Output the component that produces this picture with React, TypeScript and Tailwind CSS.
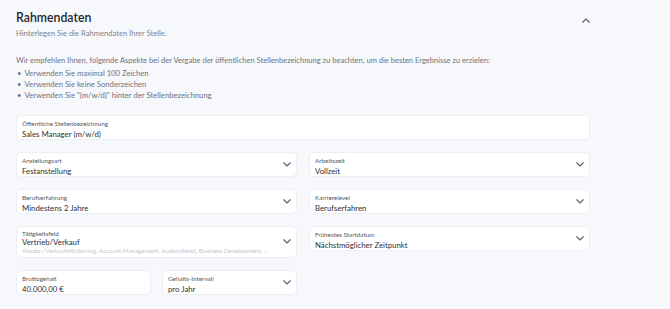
interface FieldProps {
  label: string
  value: string
  hint?: string
  select?: boolean
  className?: string
}

function Chevron({ up }: { up?: boolean }) {
  return (
    <svg width="8" height="5" viewBox="0 0 8 5" fill="none" className="shrink-0">
      <path
        d={up ? 'M0.75 4.25 L4 1 L7.25 4.25' : 'M0.75 0.75 L4 4 L7.25 0.75'}
        stroke="#5b5e66"
        strokeWidth="1.1"
        strokeLinecap="round"
        strokeLinejoin="round"
      />
    </svg>
  )
}

function Field({ label, value, hint, select, className }: FieldProps) {
  return (
    <div className={`flex items-center bg-white rounded-[5px] border border-[#eceef3] pl-[5px] pr-[5px] ${className || ''}`}>
      <div className={`flex-1 min-w-0 flex flex-col self-start overflow-hidden ${hint ? 'pt-[3px]' : 'pt-[4px]'}`}>
        <span className="text-[6.3px] leading-[7px] text-[#555861]">{label}</span>
        <span className={`text-[7.8px] leading-[10px] text-[#2d2f35] ${hint ? '' : 'mt-[2px]'}`}>{value}</span>
        {hint && <span className="text-[6.2px] leading-[8px] text-[#c3c6cc] whitespace-nowrap">{hint}</span>}
      </div>
      {select && <Chevron />}
    </div>
  )
}

export default function App() {
  return (
    <div className="w-[670px] h-[309px] bg-[#f7f8fb] overflow-hidden" style={{ fontFamily: 'Lato, "Open Sans", sans-serif' }}>
      <div className="w-[574px] ml-[16px] pt-[10px]">
        <div className="flex items-start justify-between">
          <div>
            <h2 className="text-[12.3px] leading-[15px] font-semibold text-[#25272d]">Rahmendaten</h2>
            <p className="text-[7.6px] leading-[10px] text-[#80838c] mt-[3px]">Hinterlegen Sie die Rahmendaten Ihrer Stelle.</p>
          </div>
          <div className="mt-[8px] mr-[0px]">
            <Chevron up />
          </div>
        </div>

        <p className="text-[7.55px] leading-[11px] text-[#6f727b] mt-[17px]">
          Wir empfehlen Ihnen, folgende Aspekte bei der Vergabe der öffentlichen Stellenbezeichnung zu beachten, um die besten Ergebnisse zu erzielen:
        </p>
        <ul className="text-[7.7px] leading-[11.2px] text-[#6f727b] mt-[2px]">
          <li className="flex gap-[3px] pl-[1px]"><span>•</span><span>Verwenden Sie maximal 100 Zeichen</span></li>
          <li className="flex gap-[3px] pl-[1px]"><span>•</span><span>Verwenden Sie keine Sonderzeichen</span></li>
          <li className="flex gap-[3px] pl-[1px]"><span>•</span><span>Verwenden Sie "(m/w/d)" hinter der Stellenbezeichnung</span></li>
        </ul>

        <div className="flex flex-col gap-[12px] mt-[13px]">
          <Field label="Öffentliche Stellenbezeichnung" value="Sales Manager (m/w/d)" className="h-[25px]" />
          <div className="grid grid-cols-2 gap-[12px]">
            <Field label="Anstellungsart" value="Festanstellung" select className="h-[25px]" />
            <Field label="Arbeitszeit" value="Vollzeit" select className="h-[25px]" />
          </div>
          <div className="grid grid-cols-2 gap-[12px]">
            <Field label="Berufserfahrung" value="Mindestens 2 Jahre" select className="h-[25px]" />
            <Field label="Karrierelevel" value="Berufserfahren" select className="h-[25px]" />
          </div>
          <div className="grid grid-cols-2 gap-[12px] items-start">
            <Field
              label="Tätigkeitsfeld"
              value="Vertrieb/Verkauf"
              hint="Absatz-/Verkaufsförderung, Account Management, Außendienst, Business Development, ..."
              select
              className="h-[32px]"
            />
            <Field label="Frühestes Startdatum" value="Nächstmöglicher Zeitpunkt" select className="h-[25px]" />
          </div>
          <div className="grid grid-cols-2 gap-[12px]">
            <div className="grid grid-cols-2 gap-[11px]">
              <Field label="Bruttogehalt" value="40.000,00 €" className="h-[25px]" />
              <Field label="Gehalts-Intervall" value="pro Jahr" select className="h-[25px]" />
            </div>
          </div>
        </div>
      </div>
    </div>
  )
}
